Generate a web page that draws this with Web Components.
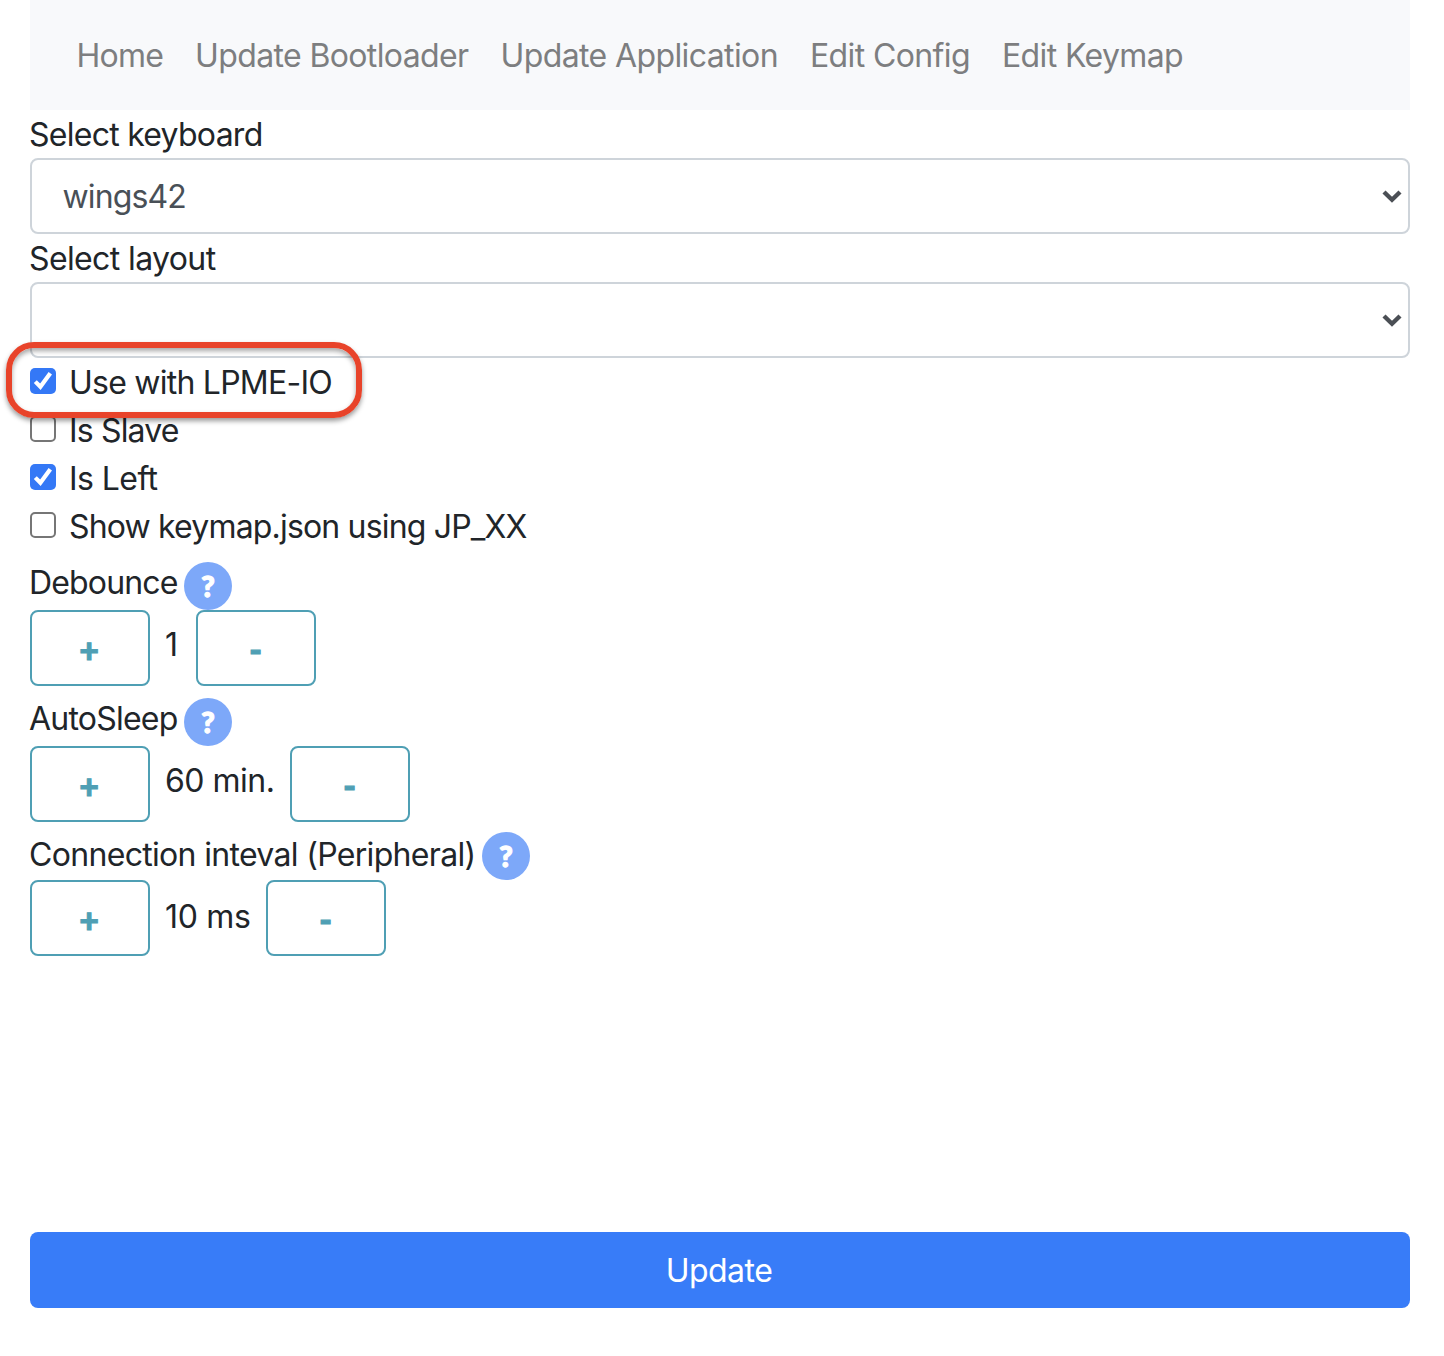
<!DOCTYPE html>
<html lang="en">
<head>
<meta charset="utf-8">
<title>Edit Config</title>
<style>
body{margin:0;background:#fff;color:#212529;font:32px/48px Inter,"Liberation Sans",sans-serif}
</style>
</head>
<body>
<config-page></config-page>
<script>
const define=(name,html,after)=>customElements.define(name,class extends HTMLElement{
  connectedCallback(){
    if(this.shadowRoot)return;
    this.attachShadow({mode:'open'}).innerHTML=html;
    if(after)after(this,this.shadowRoot);
  }
});

/* Text run tracked so that its advance equals the "w" attribute. */
define('tracked-text',`<style>:host{display:block;white-space:pre;flex:none;padding-top:1px}span{display:inline-block}</style><span><slot></slot></span>`,(el,root)=>{
  const w=+el.getAttribute('w'),s=root.querySelector('span');
  s.style.letterSpacing=((w-s.getBoundingClientRect().width)/el.textContent.length)+'px';
  el.style.width=w+'px';
});

define('nav-bar',`<style>
:host{display:flex;box-sizing:border-box;height:110px;margin:0 34px 0 30px;padding:31px 0 0 46.5px;background:#f8f9fb;color:#7d7e80}
nav{display:flex;gap:32px}</style><nav><slot></slot></nav>`);

define('field-label',`<style>:host{display:block;height:48px;padding-left:29px}</style><slot></slot>`);

define('select-box',`<style>
:host{display:flex;align-items:center;justify-content:space-between;box-sizing:border-box;height:76px;margin:0 34px 0 30px;padding:0 6px 0 30.5px;border:2px solid #ced4da;border-radius:8px;color:#495057;background:#fff}
div{padding-top:1px}
svg{display:block;flex:none}</style><div><slot></slot></div>
<svg width="20" height="14" viewBox="0 0 20 14"><path d="M2 3 10 10.8 18 3" fill="none" stroke="#4b4f55" stroke-width="4.4"/></svg>`);

define('check-row',`<style>
:host{display:flex;height:48px;padding-left:30px;gap:13px;position:relative}
i{box-sizing:border-box;width:26px;height:26px;margin-top:10px;border:2px solid #767676;border-radius:5px;background:#fff;flex:none}
svg{display:none}
:host([checked]) i{background:#3478f6;border:0}
:host([checked]) svg{display:block}
:host([marked])::after{content:"";box-sizing:border-box;position:absolute;left:6px;top:-16px;width:356px;height:76px;border:6px solid #e8432a;border-radius:28px;box-shadow:0 3px 5px rgba(0,0,0,.4),inset 0 3px 5px rgba(0,0,0,.35);z-index:2}
</style><i><svg width="26" height="26" viewBox="0 0 26 26"><path d="M5.3 13.6 10.4 18.8 20.3 5.2" fill="none" stroke="#fff" stroke-width="4.2"/></svg></i><slot></slot>`);

define('help-badge',`<style>
:host{display:flex;align-items:center;justify-content:center;width:48px;height:48px;border-radius:50%;background:#7da8f9;color:#fff;font:900 29px/48px Lato,sans-serif;-webkit-text-stroke:1.3px #fff}
</style><span>?</span>`);

define('step-button',`<style>
:host{display:block;flex:none}
button{display:flex;align-items:center;justify-content:center;box-sizing:border-box;width:120px;height:76px;margin:0;padding:4px 2px 0 0;border:2px solid #4f9fb4;border-radius:8px;background:#fff;color:#4f9fb4;font:900 34px/48px Lato,sans-serif;-webkit-text-stroke:.9px #4f9fb4}
:host([minus]) button{padding:2px 1px 0 0;-webkit-text-stroke-width:1.2px}
</style><button><slot></slot></button>`);

define('step-field',`<style>
:host{display:block;height:136px}
.head{display:flex;height:60px;box-sizing:border-box;padding:8px 0 0 29px;gap:6.5px}
help-badge{margin-top:4px}
.row{display:flex;padding-left:30px}
.value{margin-top:10px;padding:0 15.5px 0 15px}
:host([last]) .head{height:58px}
:host([last]) help-badge{margin-top:2px}
:host([last]) .value{margin-top:12px}
</style><div class="head"><slot name="label"></slot><help-badge></help-badge></div>
<div class="row"><step-button>+</step-button><div class="value"><slot></slot></div><step-button minus>-</step-button></div>`);

define('submit-button',`<style>
:host{display:block;padding:0 34px 0 30px}
button{display:flex;align-items:center;justify-content:center;width:100%;height:76px;margin:0;padding:1px 2px 0 0;border:0;border-radius:8px;background:#387cf8;color:#fff;font:inherit}
</style><button><slot></slot></button>`);

define('config-page',`<style>
:host{display:flex;flex-direction:column;height:1356px;width:1444px;overflow:hidden}
submit-button{margin-top:auto;margin-bottom:48px}
</style>
<nav-bar>
<tracked-text w="86.5">Home</tracked-text>
<tracked-text w="273.5">Update Bootloader</tracked-text>
<tracked-text w="277.5">Update Application</tracked-text>
<tracked-text w="160">Edit Config</tracked-text>
<tracked-text w="181">Edit Keymap</tracked-text>
</nav-bar>
<field-label><tracked-text w="233.5">Select keyboard</tracked-text></field-label>
<select-box><tracked-text w="123.5">wings42</tracked-text></select-box>
<field-label><tracked-text w="186.5">Select layout</tracked-text></field-label>
<select-box></select-box>
<check-row checked marked><tracked-text w="263">Use with LPME-IO</tracked-text></check-row>
<check-row><tracked-text w="109.5">Is Slave</tracked-text></check-row>
<check-row checked><tracked-text w="88.5">Is Left</tracked-text></check-row>
<check-row><tracked-text w="457.5">Show keymap.json using JP_XX</tracked-text></check-row>
<step-field><tracked-text slot="label" w="148.5">Debounce</tracked-text><tracked-text w="15.5">1</tracked-text></step-field>
<step-field><tracked-text slot="label" w="148.5">AutoSleep</tracked-text><tracked-text w="109.5">60 min.</tracked-text></step-field>
<step-field last><tracked-text slot="label" w="446.5">Connection inteval (Peripheral)</tracked-text><tracked-text w="85.5">10 ms</tracked-text></step-field>
<submit-button><tracked-text w="106.5">Update</tracked-text></submit-button>`);
</script>
</body>
</html>
